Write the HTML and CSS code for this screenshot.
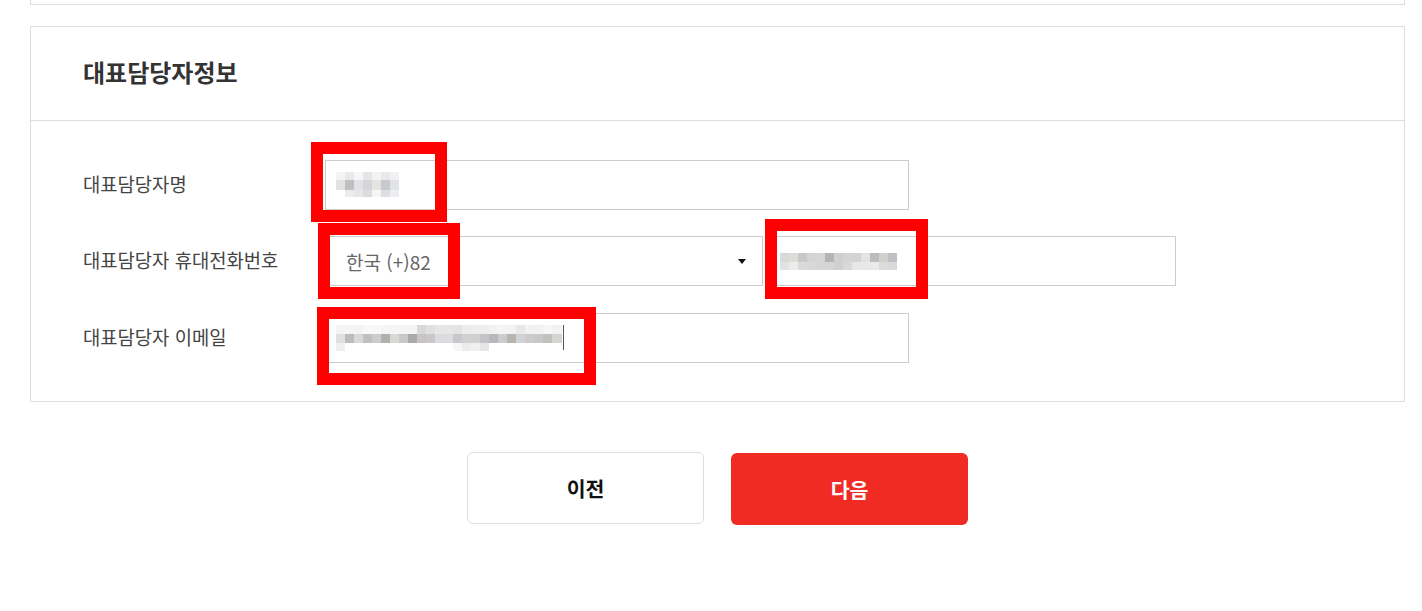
FILE: index.html
```html
<!DOCTYPE html>
<html lang="ko">
<head>
    <meta charset="UTF-8">
    <meta name="viewport" content="width=device-width, initial-scale=1.0">
    <title>대표담당자정보</title>
    <link rel="stylesheet" href="styles.css">
</head>
<body>
    <div class="wrap">
        <div class="prev-box"></div>

        <div class="section">
            <div class="section-head">
                <h2>대표담당자정보</h2>
            </div>
            <div class="section-body">
                <div class="form-row">
                    <label class="form-label">대표담당자명</label>
                    <div class="field">
                        <div class="input input-wide">
                            <span class="mosaic mosaic-name"></span>
                        </div>
                        <span class="mark mark-name"></span>
                    </div>
                </div>

                <div class="form-row">
                    <label class="form-label">대표담당자 휴대전화번호</label>
                    <div class="field">
                        <div class="input select">
                            <span class="select-text">한국 (+)82</span>
                            <span class="caret"></span>
                        </div>
                        <span class="mark mark-select"></span>
                    </div>
                    <div class="field">
                        <div class="input input-phone">
                            <span class="mosaic mosaic-phone"></span>
                        </div>
                        <span class="mark mark-phone"></span>
                    </div>
                </div>

                <div class="form-row email-row">
                    <label class="form-label">대표담당자 이메일</label>
                    <div class="field">
                        <div class="input input-wide">
                            <span class="mosaic mosaic-email"></span>
                            <span class="cursor"></span>
                        </div>
                        <span class="mark mark-email"></span>
                    </div>
                </div>
            </div>
        </div>

        <div class="buttons">
            <button type="button" class="btn btn-prev">이전</button>
            <button type="button" class="btn btn-next">다음</button>
        </div>
    </div>
</body>
</html>
```

FILE: styles.css
```css
body {
    margin: 0;
    padding: 0;
    background: #fff;
    font-family: "Noto Sans CJK KR", "Noto Sans", sans-serif;
    color: #444;
}
.wrap {
    width: 1375px;
    margin-left: 30px;
}
.prev-box {
    height: 4px;
    border: 1px solid #ddd;
    border-top: none;
}
.section {
    margin-top: 21px;
    border: 1px solid #ddd;
}
.section-head {
    height: 93px;
    display: flex;
    align-items: center;
    padding-left: 52px;
    border-bottom: 1px solid #ddd;
}
.section-head h2 {
    margin: -4px 0 0;
    font-size: 24px;
    font-weight: 700;
    color: #333;
}
.section-body {
    padding: 39px 0 38px 52px;
}
.form-row {
    display: flex;
    align-items: center;
}
.form-row + .form-row {
    margin-top: 26px;
}
.form-row.email-row {
    margin-top: 27px;
}
.form-label {
    width: 242px;
    margin-top: -3px;
    font-size: 18.8px;
    color: #444;
}
.field {
    position: relative;
}
.field + .field {
    margin-left: 2px;
}
.input {
    box-sizing: border-box;
    height: 50px;
    border: 1px solid #ccc;
    background: #fff;
    display: flex;
    align-items: center;
    padding-left: 10px;
}
.input-wide {
    width: 584px;
}
.input-phone {
    width: 411px;
    padding-left: 14px;
}
.select {
    width: 438px;
    padding: 0 16px 0 20px;
    justify-content: space-between;
}
.select-text {
    font-size: 19px;
    color: #666;
}
.caret {
    width: 0;
    height: 0;
    border-left: 4px solid transparent;
    border-right: 4px solid transparent;
    border-top: 5px solid #111;
}

/* blurred values */
.mosaic {
    display: block;
    background-repeat: no-repeat;
}
.mosaic-name {
    width: 63px;
    height: 25px;
    margin-top: -2px;
    background-image:
        linear-gradient(90deg, #f4f4f4 0 9px, #ebe8e9 9px 18px, #f6f7f7 18px 27px, #e6e6e8 27px 36px, #f4f3f1 36px 45px, #e8e9ec 45px 54px, #f1f1f1 54px 63px),
        linear-gradient(90deg, #e2e2e2 0 9px, #c0bfc1 9px 18px, #e1e2e5 18px 27px, #d5d5d7 27px 36px, #e6e4e2 36px 45px, #c8c9cd 45px 54px, #e2e3e5 54px 63px),
        linear-gradient(90deg, #fff 0 9px, #efebea 9px 18px, #e6e6e8 18px 27px, #dcdcde 27px 36px, #f8f6f2 36px 45px, #dedfe2 45px 54px, #eceef0 54px 63px);
    background-size: 63px 8px, 63px 10px, 63px 7px;
    background-position: 0 0, 0 8px, 0 18px;
}
.mosaic-phone {
    width: 117px;
    height: 17px;
    background-image:
        linear-gradient(90deg, #d8d8d6 0 9px, #dcdcd8 9px 18px, #c8c8cc 18px 27px, #d4d4d4 27px 36px, #d6d6d6 36px 45px, #b4b4b6 45px 54px, #d0d0d0 54px 63px, #d4d4d4 63px 72px, #d6d2cf 72px 81px, #e0e4e6 81px 90px, #bcbcbc 90px 99px, #d0d0ce 99px 108px, #c0c0c4 108px 117px),
        linear-gradient(90deg, #e2e2e2 0 9px, #ececec 9px 18px, #dadada 18px 27px, #d8d8d8 27px 36px, #d4d6d6 36px 45px, #d6d6d6 45px 54px, #d0d0d0 54px 63px, #d8d8d8 63px 72px, #e8e8e8 72px 81px, #e6e8ea 81px 90px, #eaeaea 90px 99px, #dcdcdc 99px 108px, #dadada 108px 117px);
    background-size: 117px 9px, 117px 8px;
    background-position: 0 0, 0 9px;
}
.mosaic-email {
    width: 226px;
    height: 26px;
    background-image:
        linear-gradient(90deg, #f4f4f4 0 27px, #f8f8f8 27px 45px, #f5f5f5 45px 81px, #d8d8d8 81px 90px, #e0e0e0 90px 99px, #e6e6e6 99px 117px, #e4e4e4 117px 126px, #ececec 126px 135px, #eeeeee 135px 153px, #f2f2f2 153px 162px, #f4f4f4 162px 171px, #f2f2f2 171px 180px, #e6e8ea 180px 189px, #f2f2f2 189px 207px, #f6f6f6 207px 216px, #f2f2f2 216px 226px),
        linear-gradient(90deg, #e0e0e0 0 9px, #bcbcbc 9px 18px, #d8d8d8 18px 27px, #c0c0c0 27px 36px, #cccccc 36px 45px, #b0b0b0 45px 54px, #d8d8d4 54px 63px, #c8c8c8 63px 72px, #a8aaac 72px 81px, #c8c4c4 81px 90px, #c8c8c8 90px 99px, #dcdce0 99px 108px, #dcdcdc 108px 117px, #c8c8cc 117px 126px, #d0d0d0 126px 144px, #c4c4c4 144px 153px, #b8b8bc 153px 162px, #cccccc 162px 171px, #b8b4b0 171px 180px, #d0d4d8 180px 189px, #cccccc 189px 198px, #c8c8c8 198px 207px, #c0c0c0 207px 216px, #d4d4d0 216px 226px),
        linear-gradient(90deg, #eeeff1 0 9px, transparent 9px 117px, #f6f6f6 117px 126px, #ececec 126px 135px, #f0f0f0 135px 144px, #e6e6e8 144px 153px, transparent 153px);
    background-size: 226px 9px, 226px 9px, 226px 8px;
    background-position: 0 0, 0 9px, 0 18px;
}
.cursor {
    width: 1px;
    height: 25px;
    margin-left: 1px;
    margin-top: -2px;
    background: #555;
}

/* red annotation frames */
.mark {
    position: absolute;
    box-sizing: border-box;
    border: 12px solid #ff0000;
    pointer-events: none;
}
.mark-name {
    left: -14px;
    top: -18px;
    width: 136px;
    height: 80px;
}
.mark-select {
    left: -7px;
    top: -13px;
    width: 142px;
    height: 76px;
}
.mark-phone {
    left: 0;
    top: -17px;
    width: 163px;
    height: 80px;
}
.mark-email {
    left: -8px;
    top: -6px;
    width: 279px;
    height: 78px;
}

.buttons {
    display: flex;
    justify-content: center;
    align-items: flex-start;
    gap: 27px;
    margin-top: 50px;
}
.btn {
    box-sizing: border-box;
    width: 237px;
    height: 72px;
    border-radius: 6px;
    font-family: "Noto Sans CJK KR", "Noto Sans", sans-serif;
    font-size: 20.5px;
    font-weight: 700;
    cursor: pointer;
}
.btn-prev {
    background: #fff;
    border: 1px solid #ddd;
    color: #111;
}
.btn-next {
    margin-top: 1px;
    background: #ef2b24;
    border: none;
    color: #fff;
}
```
